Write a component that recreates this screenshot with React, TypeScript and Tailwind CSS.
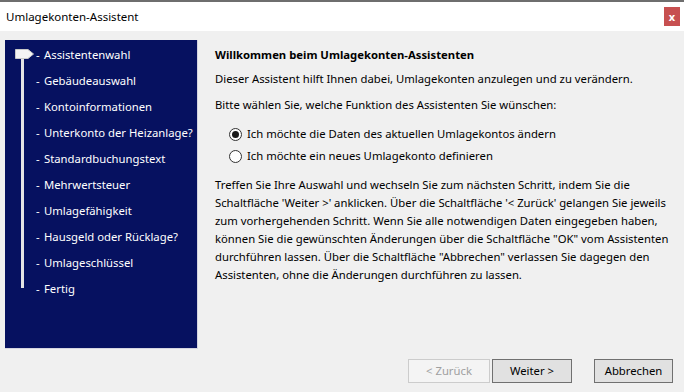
import React from "react";

const steps = [
  "Assistentenwahl",
  "Gebäudeauswahl",
  "Kontoinformationen",
  "Unterkonto der Heizanlage?",
  "Standardbuchungstext",
  "Mehrwertsteuer",
  "Umlagefähigkeit",
  "Hausgeld oder Rücklage?",
  "Umlageschlüssel",
  "Fertig",
];

function Radio({ checked, label }: { checked: boolean; label: string }) {
  return (
    <div className="flex items-center h-[18px] pl-[14px]">
      <span className="w-[13px] h-[13px] rounded-full border border-[#333] bg-white flex items-center justify-center shrink-0">
        {checked && <span className="w-[7px] h-[7px] rounded-full bg-[#1a1a1a]" />}
      </span>
      <span className="ml-[5px]">{label}</span>
    </div>
  );
}

export default function App() {
  const font = { fontFamily: '"Noto Sans", "Segoe UI", sans-serif' };
  return (
    <div
      className="w-[684px] h-[392px] bg-[#f0f0f0] flex flex-col text-[11.3px] text-black overflow-hidden whitespace-nowrap"
      style={font}
    >
      <div className="h-[2px] bg-[#6e6e6e] shrink-0" />
      <div className="h-[29px] bg-white flex items-center justify-between pl-[6px] pr-[4px] shrink-0">
        <span className="text-[11.5px]">Umlagekonten-Assistent</span>
        <div className="w-[16px] h-[19px] bg-[#c75050] flex items-center justify-center text-white text-[11px] font-bold leading-none">
          x
        </div>
      </div>
      <div className="flex flex-1 pl-[5px] pt-[9px]">
        <div className="relative shrink-0 w-[193px] h-[309px] bg-[#061160] border-r border-b border-[#d4d4e0] pt-[2px]">
          <svg className="absolute left-[10px] top-[9px]" width="20" height="10" viewBox="0 0 20 10">
            <polygon points="0.5,0.5 13,0.5 18.5,5 13,9.5 0.5,9.5" fill="#f4f4f4" stroke="#c8c8c8" />
          </svg>
          <div className="absolute left-[16px] top-[19px] w-[3px] h-[229px] bg-[#e4e4e4]" />
          {steps.map((s) => (
            <div key={s} className="h-[26px] flex items-center text-white">
              <span className="ml-[31px] w-[8px]">-</span>
              <span>{s}</span>
            </div>
          ))}
        </div>
        <div className="ml-[17px] pt-[6px] flex flex-col">
          <div className="font-bold h-[18px] leading-[18px]">Willkommen beim Umlagekonten-Assistenten</div>
          <div className="mt-[6px] h-[18px] leading-[18px]">
            Dieser Assistent hilft Ihnen dabei, Umlagekonten anzulegen und zu verändern.
          </div>
          <div className="mt-[8px] h-[18px] leading-[18px]">
            Bitte wählen Sie, welche Funktion des Assistenten Sie wünschen:
          </div>
          <div className="mt-[11px] flex flex-col gap-[4px]">
            <Radio checked label="Ich möchte die Daten des aktuellen Umlagekontos ändern" />
            <Radio checked={false} label="Ich möchte ein neues Umlagekonto definieren" />
          </div>
          <div className="mt-[11px] leading-[18px]">
            Treffen Sie Ihre Auswahl und wechseln Sie zum nächsten Schritt, indem Sie die
            <br />
            Schaltfläche 'Weiter &gt;' anklicken. Über die Schaltfläche '&lt; Zurück' gelangen Sie jeweils
            <br />
            zum vorhergehenden Schritt. Wenn Sie alle notwendigen Daten eingegeben haben,
            <br />
            können Sie die gewünschten Änderungen über die Schaltfläche "OK" vom Assistenten
            <br />
            durchführen lassen. Über die Schaltfläche "Abbrechen" verlassen Sie dagegen den
            <br />
            Assistenten, ohne die Änderungen durchführen zu lassen.
          </div>
        </div>
      </div>
      <div className="h-[33px] flex items-start pl-[408px] shrink-0">
        <button className="w-[82px] h-[24px] border border-[#cccccc] bg-[#f4f4f4] text-[#a0a0a0]">
          &lt; Zurück
        </button>
        <button className="ml-[2px] w-[80px] h-[24px] border border-[#707070] bg-[#e1e1e1]">
          Weiter &gt;
        </button>
        <button className="ml-[22px] w-[79px] h-[24px] border border-[#707070] bg-[#e1e1e1]">
          Abbrechen
        </button>
      </div>
    </div>
  );
}
